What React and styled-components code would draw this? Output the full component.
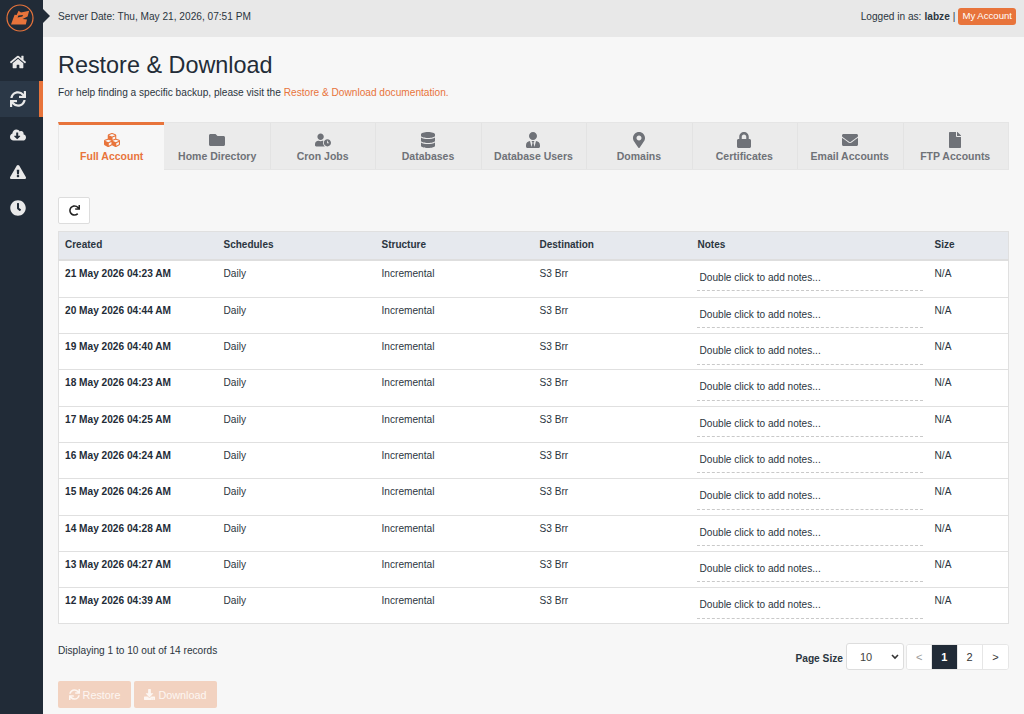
import React from "react";
import styled, { createGlobalStyle } from "styled-components";
import {
  FaHome, FaSync, FaCloudDownloadAlt, FaExclamationTriangle, FaClock, FaCubes, FaFolder,
  FaUserClock, FaDatabase, FaUserTie, FaMapMarkerAlt, FaLock, FaEnvelope, FaFile, FaRedo, FaDownload,
} from "react-icons/fa";

const Global = createGlobalStyle`
  html, body { margin: 0; padding: 0; height: 100%; }
  body { font-family: "Liberation Sans", Arial, sans-serif; background: #f7f7f7; color: #2b3540; overflow: hidden; }
  * { box-sizing: border-box; }
`;

const Page = styled.div`display: flex; width: 1024px; height: 714px; overflow: hidden;`;
const Sidebar = styled.aside`width: 43px; flex: none; background: #212b37; display: flex; flex-direction: column;`;
const LogoWrap = styled.div`height: 36px; display: flex; align-items: center; justify-content: center; padding: 0 3px 1px 0; margin-bottom: 8.2px;`;
const NavItem = styled.div`
  height: 36.4px; display: flex; align-items: center; justify-content: center; color: #e9e9e9; font-size: 16px;
  padding-right: ${p => p.$active ? 4 : 8}px;
  background: ${p => p.$active ? "#2b3847" : "transparent"};
  border-right: ${p => p.$active ? "4px solid #e8743b" : "none"};
`;
const Main = styled.main`flex: 1; min-width: 0; display: flex; flex-direction: column;`;
const TopBar = styled.header`
  position: relative; height: 37px; background: #e8e8e8; display: flex; align-items: center; justify-content: space-between;
  padding: 0 8px 5px 15px; font-size: 10.15px;
  &::before { content: ""; position: absolute; left: 0; top: 9px; border-left: 7px solid #212b37; border-top: 7px solid transparent; border-bottom: 7px solid transparent; }
`;
const Logged = styled.div`display: flex; align-items: center; gap: 3px; b { font-weight: 700; }`;
const AccountBtn = styled.span`background: #e8743b; color: #fff; font-size: 9.6px; padding: 0 4px; height: 17px; line-height: 16px; border-radius: 3px; margin-top: 1px;`;
const Content = styled.div`padding: 15px 15px 0 15px;`;
const Title = styled.h1`font-size: 23.4px; font-weight: 400; margin: 0; line-height: 27px; color: #232c37;`;
const Help = styled.p`font-size: 10.15px; margin: 7px 0 0; line-height: 13px; a { color: #e8743b; text-decoration: none; }`;
const Tabs = styled.div`
  display: flex; margin-top: 23px; height: 48px; background: #ebebeb; border: 1px solid #e5e5e5; border-left: none;
`;
const Tab = styled.div`
  flex: 1 1 0; min-width: 0; display: flex; flex-direction: column; align-items: center; font-weight: 700; font-size: 10.5px;
  color: ${p => p.$active ? "#e8743b" : "#6f7278"};
  background: ${p => p.$active ? "#f7f7f7" : "transparent"};
  border-right: ${p => p.$last || p.$active ? "none" : "1px solid #e3e3e3"};
  border-left: ${p => p.$active ? "1px solid #e8e8e8" : "none"};
  border-top: ${p => p.$active ? "3px solid #e8743b" : "none"};
  margin-top: ${p => p.$active ? "-1px" : "0"};
  margin-right: ${p => p.$last || p.$active ? "0" : "-1px"};
  padding-top: ${p => p.$active ? "7px" : "9px"};
  height: ${p => p.$active ? "48px" : "46px"};
  svg { font-size: 16px; height: 16px; margin-bottom: 2px; }
  span { line-height: 13px; }
`;
const RefreshBtn = styled.button`
  display: flex; align-items: center; justify-content: center; width: 32px; height: 27px; margin-top: 27px; background: #fff; border: 1px solid #ddd; border-radius: 2px; padding: 0; color: #222; font-size: 11px;
`;
const Table = styled.table`
  width: 951px; margin-top: 7px; border-collapse: collapse; table-layout: fixed; background: #fff; border: 1px solid #e0e0e0; font-size: 10.15px;
`;
const HeadRow = styled.tr`background: #e6e9ee; height: 28px; border-bottom: 2px solid #dedede;`;
const Th = styled.th`text-align: left; padding: 0 ${p => p.$pad || 6}px 2px; font-weight: 700; font-size: 10px; color: #2b3540; width: ${p => p.$w}px;`;
const Tr = styled.tr`height: 36.3px; border-bottom: 1px solid #e0e0e0; &:first-child { height: 37.8px; } &:last-child { border-bottom: none; }`;
const Td = styled.td`vertical-align: top; padding: 6px 6px 0 7px; line-height: 13px; font-weight: ${p => p.$bold ? 700 : 400}; color: ${p => p.$bold ? "#232c37" : "#2b3540"}; overflow: hidden; &:first-child { padding-left: 6px; }`;
const Notes = styled.div`margin: 4px -1px 0 -1px; padding: 0 3px 5px 3px; height: 20.5px; border-bottom: 1px dashed #c9c9c9; white-space: nowrap; font-size: 10.1px;`;
const Footer = styled.div`display: flex; justify-content: space-between; align-items: flex-start; margin-top: 19px;`;
const Count = styled.div`font-size: 10.15px; line-height: 13px; padding-top: 1px;`;
const Pager = styled.div`display: flex; align-items: center; font-size: 10.5px;`;
const PageLabel = styled.b`margin-right: 3px; font-weight: 700; padding-top: 3px; font-size: 10.2px;`;
const Select = styled.div`
  position: relative; width: 58px; height: 27px; background: #fff; border: 1px solid #ddd; border-radius: 3px; font-size: 11px; color: #444; line-height: 26px; padding-left: 13px; margin-right: 2px;
  svg { position: absolute; right: 4px; top: 10px; }
`;
const PageGroup = styled.div`display: flex; height: 26px; background: #fff; border: 1px solid #e6e6e6; border-radius: 3px; overflow: hidden;`;
const PageCell = styled.div`
  width: 25.25px; display: flex; align-items: center; justify-content: center; font-size: 11px;
  background: ${p => p.$active ? "#212b37" : "#fff"}; color: ${p => p.$active ? "#fff" : p.$muted ? "#999" : "#333"};
  font-weight: ${p => p.$active ? 700 : 400};
  border-right: 1px solid #e6e6e6;
  &:last-child { border-right: none; }
`;
const Actions = styled.div`display: flex; gap: 3px; margin-top: 11px;`;
const ActionBtn = styled.div`
  display: flex; align-items: center; justify-content: center; gap: 3px; width: ${p => p.$w}px; height: 27px; background: #f2d2c0; color: #fdf6f2; border-radius: 2px; font-size: 10.8px;
  svg { font-size: 11px; }
`;

const Logo = () => (
  <svg width="28" height="28" viewBox="0 0 28 28" aria-hidden="true">
    <circle cx="14" cy="14" r="13" fill="none" stroke="#e8743b" strokeWidth="1.2" />
    <path fillRule="evenodd" d="M5 20.5 L8.6 10.8 L10.6 11 L12.6 6.8 L15 8.6 L23.2 6.8 L21.6 12.4 L16.6 15 L21 15.4 L19.8 20.5 Z M12.4 11.4 L11.6 13.4 L16.4 12.4 L17 11 Z" fill="#e8743b" />
  </svg>
);

const tabs = [
  ["Full Account", FaCubes], ["Home Directory", FaFolder], ["Cron Jobs", FaUserClock], ["Databases", FaDatabase],
  ["Database Users", FaUserTie], ["Domains", FaMapMarkerAlt], ["Certificates", FaLock], ["Email Accounts", FaEnvelope], ["FTP Accounts", FaFile],
];
const rows = ["21 May 2026 04:23 AM","20 May 2026 04:44 AM","19 May 2026 04:40 AM","18 May 2026 04:23 AM","17 May 2026 04:25 AM","16 May 2026 04:24 AM","15 May 2026 04:26 AM","14 May 2026 04:28 AM","13 May 2026 04:27 AM","12 May 2026 04:39 AM"];

export default function App() {
  return (
    <Page>
      <Global />
      <Sidebar>
        <LogoWrap><Logo /></LogoWrap>
        <NavItem><FaHome /></NavItem>
        <NavItem $active><FaSync /></NavItem>
        <NavItem><FaCloudDownloadAlt /></NavItem>
        <NavItem><FaExclamationTriangle /></NavItem>
        <NavItem><FaClock /></NavItem>
      </Sidebar>
      <Main>
        <TopBar>
          <span>Server Date: Thu, May 21, 2026, 07:51 PM</span>
          <Logged><span>Logged in as:</span> <b>labze</b> <span>|</span> <AccountBtn>My Account</AccountBtn></Logged>
        </TopBar>
        <Content>
          <Title>Restore &amp; Download</Title>
          <Help>For help finding a specific backup, please visit the <a href="#d">Restore &amp; Download documentation.</a></Help>
          <Tabs>
            {tabs.map(([label, Icon], i) => (
              <Tab key={label} $active={i === 0} $last={i === tabs.length - 1}><Icon /><span>{label}</span></Tab>
            ))}
          </Tabs>
          <RefreshBtn aria-label="Refresh"><FaRedo /></RefreshBtn>
          <Table>
            <thead>
              <HeadRow>
                <Th $w={158}>Created</Th><Th $w={158} $pad={7}>Schedules</Th><Th $w={158} $pad={7}>Structure</Th><Th $w={158} $pad={7}>Destination</Th><Th $w={237} $pad={7}>Notes</Th><Th $pad={7}>Size</Th>
              </HeadRow>
            </thead>
            <tbody>
              {rows.map(r => (
                <Tr key={r}>
                  <Td $bold>{r}</Td><Td>Daily</Td><Td>Incremental</Td><Td>S3 Brr</Td>
                  <Td><Notes>Double click to add notes...</Notes></Td><Td>N/A</Td>
                </Tr>
              ))}
            </tbody>
          </Table>
          <Footer>
            <Count>Displaying 1 to 10 out of 14 records</Count>
            <Pager>
              <PageLabel>Page Size</PageLabel>
              <Select>10<svg width="8" height="6" viewBox="0 0 8 6"><path d="M1 1l3 3 3-3" fill="none" stroke="#333" strokeWidth="1.6" /></svg></Select>
              <PageGroup>
                <PageCell $muted>&lt;</PageCell><PageCell $active>1</PageCell><PageCell>2</PageCell><PageCell>&gt;</PageCell>
              </PageGroup>
            </Pager>
          </Footer>
          <Actions>
            <ActionBtn $w={73}><FaSync /> Restore</ActionBtn>
            <ActionBtn $w={83}><FaDownload /> Download</ActionBtn>
          </Actions>
        </Content>
      </Main>
    </Page>
  );
}
